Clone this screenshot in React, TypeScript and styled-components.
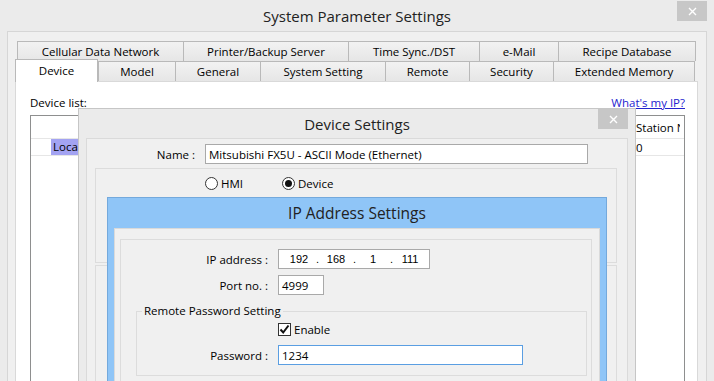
import { createGlobalStyle, styled } from "styled-components";

const GlobalStyle = createGlobalStyle`
  html, body {
    margin: 0;
    padding: 0;
  }
  body {
    width: 714px;
    height: 381px;
    overflow: hidden;
    background: #ebebeb;
    font-family: "Open Sans", "Noto Sans", sans-serif;
    font-size: 11.5px;
    color: #000;
  }
  * {
    box-sizing: border-box;
  }
`;

const Window = styled.div`
  position: relative;
  width: 714px;
  height: 381px;
  overflow: hidden;
  background: #ebebeb;
  display: flex;
  flex-direction: column;
`;

const TitleBar = styled.div`
  height: 31px;
  display: flex;
  align-items: center;
  justify-content: center;
`;

const Title = styled.div<{ $size?: number }>`
  font-size: ${(p) => p.$size ?? 15}px;
  color: #222;
  line-height: 20px;
`;

const CloseButton = styled.div<{ $top: number; $right: number }>`
  position: absolute;
  top: ${(p) => p.$top}px;
  right: ${(p) => p.$right}px;
  width: 30px;
  height: 20px;
  background: #c7c7c7;
  display: flex;
  align-items: center;
  justify-content: center;
`;

const Client = styled.div`
  flex: 1;
  margin: 0 7px;
  border: 1px solid #d6d6d6;
  border-bottom: none;
  background: #f0f0f0;
  padding: 9px 8px 0 7px;
  display: flex;
  flex-direction: column;
`;

const TabRow = styled.div<{ $back?: boolean }>`
  display: flex;
  align-items: flex-end;
  height: 20px;
  margin-left: ${(p) => (p.$back ? 2 : 0)}px;
`;

const Tab = styled.div<{ $w: number; $active?: boolean; $last?: boolean }>`
  width: ${(p) => p.$w}px;
  height: ${(p) => (p.$active ? 23 : 20)}px;
  margin-bottom: ${(p) => (p.$active ? -1 : 0)}px;
  border: 1px solid #b9b9b9;
  border-right: ${(p) => (p.$last || p.$active ? "1px solid #b9b9b9" : "none")};
  border-bottom: none;
  background: ${(p) => (p.$active ? "#fff" : "linear-gradient(#f2f2f2, #e6e6e6)")};
  display: flex;
  align-items: center;
  justify-content: center;
  white-space: nowrap;
  position: relative;
  z-index: ${(p) => (p.$active ? 1 : 0)};
  padding-bottom: ${(p) => (p.$active ? 2 : 0)}px;
`;

const Panel = styled.div`
  flex: 1;
  background: #fff;
  border: 1px solid #d9d9d9;
  border-bottom: none;
  padding: 0 12px 0 14px;
  display: flex;
  flex-direction: column;
`;

const PanelHeader = styled.div`
  display: flex;
  justify-content: space-between;
  align-items: center;
  height: 16px;
  margin: 12px 0 5px;
`;

const Link = styled.span`
  color: #2323cf;
  text-decoration: underline;
`;

const ListBox = styled.div`
  flex: 1;
  border: 1px solid #8e8f8f;
  border-bottom: none;
  overflow: hidden;
`;

const ListLine = styled.div<{ $header?: boolean }>`
  display: grid;
  grid-template-columns: 601px 48px;
  height: ${(p) => (p.$header ? 23 : 17)}px;
  align-items: center;
  border-bottom: 1px solid #e6e6e6;
  white-space: nowrap;
`;

const Cell = styled.div`
  padding-left: 4px;
  overflow: hidden;
`;

const Selected = styled.span`
  margin-left: 20px;
  padding: 0 3px 0 2px;
  background: #a3a3f2;
  line-height: 16px;
  display: inline-block;
`;

const Dialog = styled.div<{ $left: number; $top: number; $w: number }>`
  position: absolute;
  left: ${(p) => p.$left}px;
  top: ${(p) => p.$top}px;
  width: ${(p) => p.$w}px;
  height: 300px;
  background: #ebebeb;
  border: 1px solid #c6c6c6;
  display: flex;
  flex-direction: column;
`;

const BlueDialog = styled(Dialog)`
  background: #8fc5f7;
  border-color: #74a9dc;
`;

const DialogTitle = styled.div<{ $h: number }>`
  height: ${(p) => p.$h}px;
  display: flex;
  align-items: center;
  justify-content: center;
`;

const DialogBody = styled.div<{ $inset: number }>`
  flex: 1;
  margin: 0 ${(p) => p.$inset}px;
  background: #f0f0f0;
  border: 1px solid #dadada;
  border-bottom: none;
  display: flex;
  flex-direction: column;
`;

const FieldRow = styled.div<{ $mt: number }>`
  display: flex;
  align-items: center;
  margin-top: ${(p) => p.$mt}px;
`;

const FieldLabel = styled.div<{ $w: number }>`
  width: ${(p) => p.$w}px;
  margin-right: 10px;
  text-align: right;
  white-space: nowrap;
`;

const Input = styled.div<{ $w: number; $focus?: boolean }>`
  width: ${(p) => p.$w}px;
  height: 20px;
  background: #fff;
  border: 1px solid ${(p) => (p.$focus ? "#5a9ee2" : "#a9a9a9")};
  padding-left: 3px;
  display: flex;
  align-items: center;
  white-space: nowrap;
  overflow: hidden;
`;

const IpInput = styled(Input)`
  padding-left: 5px;
  font-family: "Liberation Sans", Arial, sans-serif;
  font-size: 11px;
`;

const Octet = styled.span`
  width: 30px;
  text-align: center;
`;

const Dot = styled.span`
  width: 7px;
  text-align: center;
`;

const GroupBox = styled.div<{ $mt: number; $ml: number; $mr: number; $h?: number }>`
  margin: ${(p) => p.$mt}px ${(p) => p.$mr}px 0 ${(p) => p.$ml}px;
  height: ${(p) => (p.$h ? `${p.$h}px` : "auto")};
  flex: ${(p) => (p.$h ? "none" : 1)};
  border: 1px solid #dcdcdc;
  border-bottom: ${(p) => (p.$h ? "1px solid #dcdcdc" : "none")};
  display: flex;
  flex-direction: column;
`;

const RadioRow = styled.div`
  display: flex;
  align-items: center;
  height: 13px;
  margin: 8px 0 0 109px;
`;

const RadioOption = styled.div<{ $w?: number }>`
  display: flex;
  align-items: center;
  gap: 3px;
  width: ${(p) => (p.$w ? `${p.$w}px` : "auto")};
`;

const RadioCircle = styled.span<{ $checked?: boolean }>`
  width: 13px;
  height: 13px;
  border-radius: 50%;
  border: 1px solid #333;
  background: #fff;
  display: flex;
  align-items: center;
  justify-content: center;
  &::after {
    content: "";
    width: 7px;
    height: 7px;
    border-radius: 50%;
    background: ${(p) => (p.$checked ? "#111" : "transparent")};
  }
`;

const Fieldset = styled.fieldset`
  margin: 8px 4px 0 15px;
  padding: 0;
  height: 73px;
  border: 1px solid #dcdcdc;
  min-width: 0;
`;

const Legend = styled.legend`
  margin-left: 5px;
  padding: 0 2px;
  line-height: 16px;
`;

const CheckRow = styled.div`
  display: flex;
  align-items: center;
  gap: 3px;
  margin: 4px 0 0 141px;
  height: 13px;
`;

const CheckBox = styled.span`
  width: 13px;
  height: 13px;
  border: 1px solid #333;
  background: #fff;
  display: flex;
  align-items: center;
  justify-content: center;
`;

function CloseX() {
  return (
    <svg width="9" height="9" viewBox="0 0 9 9">
      <path d="M1 1 L8 8 M8 1 L1 8" stroke="#fff" strokeWidth="1.4" />
    </svg>
  );
}

const backTabs: [string, number][] = [
  ["Cellular Data Network", 166],
  ["Printer/Backup Server", 165],
  ["Time Sync./DST", 131],
  ["e-Mail", 79],
  ["Recipe Database", 138],
];

const frontTabs: [string, number][] = [
  ["Device", 83],
  ["Model", 77],
  ["General", 85],
  ["System Setting", 125],
  ["Remote", 84],
  ["Security", 84],
  ["Extended Memory", 142],
];

export default function App() {
  return (
    <>
      <GlobalStyle />
      <Window>
        <TitleBar>
          <Title>System Parameter Settings</Title>
        </TitleBar>
        <CloseButton $top={1} $right={7}>
          <CloseX />
        </CloseButton>
        <Client>
          <TabRow $back>
            {backTabs.map(([label, w], i) => (
              <Tab key={label} $w={w} $last={i === backTabs.length - 1}>
                {label}
              </Tab>
            ))}
          </TabRow>
          <TabRow>
            {frontTabs.map(([label, w], i) => (
              <Tab key={label} $w={w} $active={i === 0} $last={i === frontTabs.length - 1}>
                {label}
              </Tab>
            ))}
          </TabRow>
          <Panel>
            <PanelHeader>
              <span>Device list:</span>
              <Link>What's my IP?</Link>
            </PanelHeader>
            <ListBox>
              <ListLine $header>
                <Cell />
                <Cell>Station No.</Cell>
              </ListLine>
              <ListLine>
                <div>
                  <Selected>Local HMI</Selected>
                </div>
                <Cell>0</Cell>
              </ListLine>
            </ListBox>
          </Panel>
        </Client>

        <Dialog $left={78} $top={108} $w={558}>
          <DialogTitle $h={29}>
            <Title>Device Settings</Title>
          </DialogTitle>
          <CloseButton $top={0} $right={7}>
            <CloseX />
          </CloseButton>
          <DialogBody $inset={7}>
            <FieldRow $mt={5}>
              <FieldLabel $w={108}>Name :</FieldLabel>
              <Input $w={383}>Mitsubishi FX5U - ASCII Mode (Ethernet)</Input>
            </FieldRow>
            <GroupBox $mt={4} $ml={8} $mr={10} $h={95}>
              <RadioRow>
                <RadioOption $w={77}>
                  <RadioCircle />
                  HMI
                </RadioOption>
                <RadioOption>
                  <RadioCircle $checked />
                  Device
                </RadioOption>
              </RadioRow>
            </GroupBox>
            <GroupBox $mt={2} $ml={8} $mr={10} />
          </DialogBody>
        </Dialog>

        <BlueDialog $left={107} $top={197} $w={500}>
          <DialogTitle $h={30}>
            <Title $size={15.5}>IP Address Settings</Title>
          </DialogTitle>
          <DialogBody $inset={6}>
            <GroupBox $mt={10} $ml={5} $mr={7}>
              <FieldRow $mt={9}>
                <FieldLabel $w={147}>IP address :</FieldLabel>
                <IpInput $w={152}>
                  <Octet>192</Octet>
                  <Dot>.</Dot>
                  <Octet>168</Octet>
                  <Dot>.</Dot>
                  <Octet>1</Octet>
                  <Dot>.</Dot>
                  <Octet>111</Octet>
                </IpInput>
              </FieldRow>
              <FieldRow $mt={6}>
                <FieldLabel $w={147}>Port no. :</FieldLabel>
                <Input $w={46}>4999</Input>
              </FieldRow>
              <Fieldset>
                <Legend>Remote Password Setting</Legend>
                <CheckRow>
                  <CheckBox>
                    <svg width="11" height="11" viewBox="0 0 11 11">
                      <path d="M1.5 5.5 L4.2 8.5 L9.5 1.5" stroke="#111" strokeWidth="2" fill="none" />
                    </svg>
                  </CheckBox>
                  Enable
                </CheckRow>
                <FieldRow $mt={9}>
                  <FieldLabel $w={131}>Password :</FieldLabel>
                  <Input $w={245} $focus>
                    1234
                  </Input>
                </FieldRow>
              </Fieldset>
            </GroupBox>
          </DialogBody>
        </BlueDialog>
      </Window>
    </>
  );
}
